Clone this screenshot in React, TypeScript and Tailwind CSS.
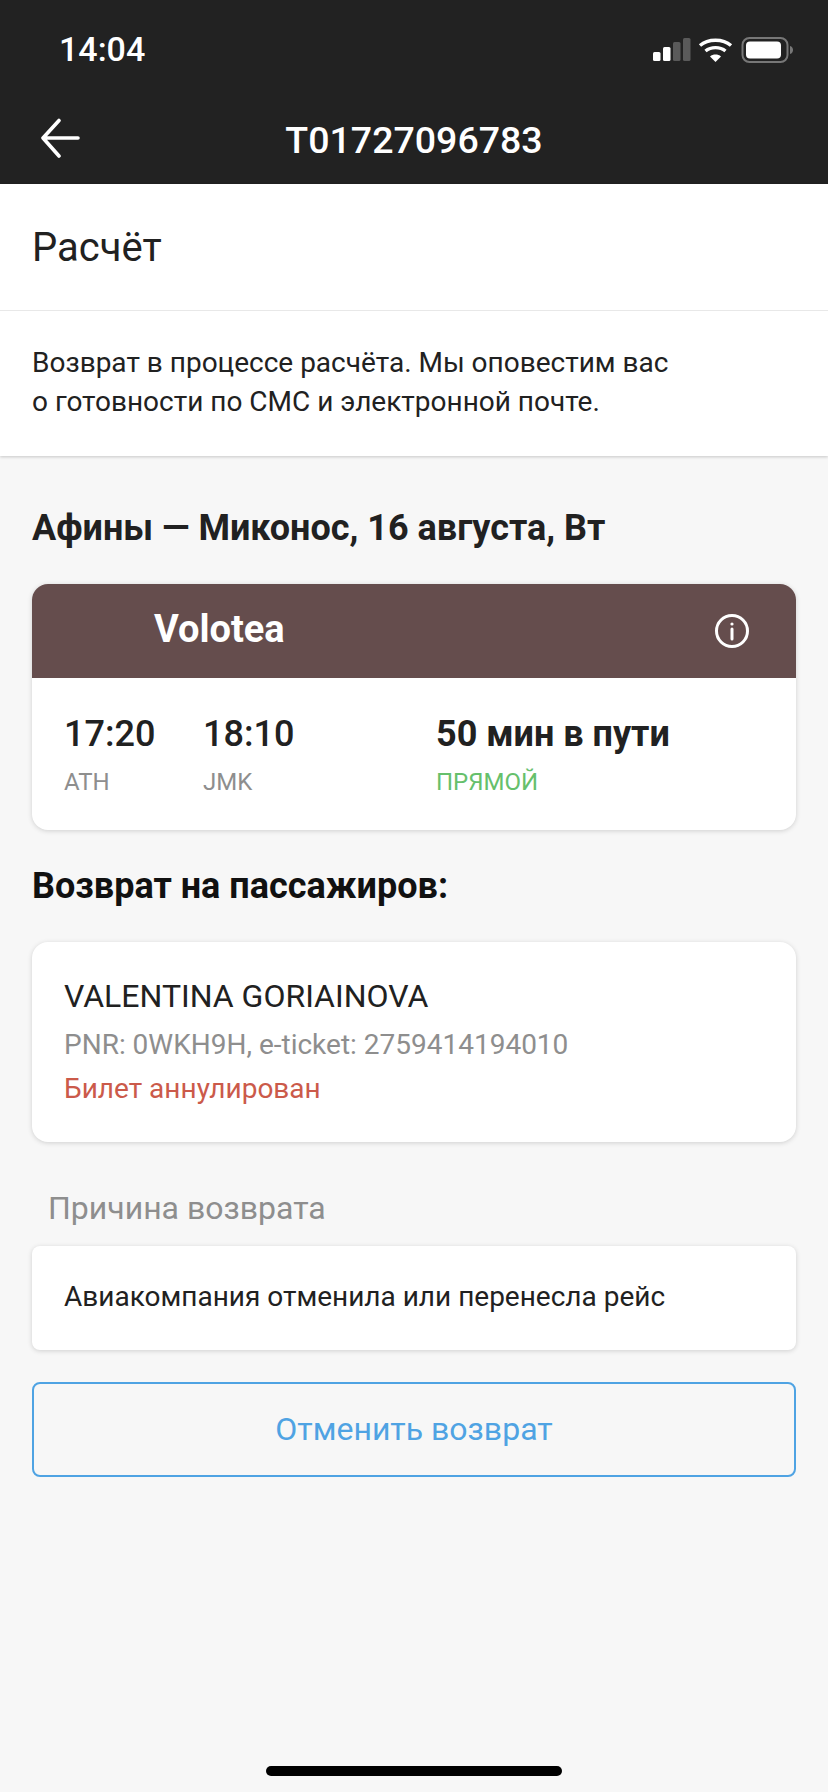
import React from "react";

function StatusIcons() {
  return (
    <svg width="142" height="26" viewBox="0 0 142 26" className="block">
      <rect x="0" y="15" width="7.5" height="9" rx="1.5" fill="#fff" />
      <rect x="10" y="10" width="7.5" height="14" rx="1.5" fill="#fff" />
      <rect x="20" y="5" width="7.5" height="19" rx="1.5" fill="#5a5a5a" />
      <rect x="30" y="1" width="7.5" height="23" rx="1.5" fill="#5a5a5a" />
      <path d="M47 8.5 C55 1.5 70 1.5 78 8.5" fill="none" stroke="#fff" strokeWidth="3.4" />
      <path d="M52.5 14 C58 9.5 67 9.5 72.5 14" fill="none" stroke="#fff" strokeWidth="3.4" />
      <path d="M62.5 25 L57 19.4 C60 16.8 65 16.8 68 19.4 Z" fill="#fff" />
      <rect x="89.5" y="1" width="45" height="24" rx="7" fill="none" stroke="#777" strokeWidth="2" />
      <rect x="93" y="4.5" width="35" height="17" rx="4" fill="#fff" />
      <path d="M137 9 C141 10 141 16 137 17 Z" fill="#777" />
    </svg>
  );
}

function Card({ children, className }: { children: React.ReactNode; className: string }) {
  return (
    <div className={"bg-white shadow-[0_1px_5px_rgba(0,0,0,0.16)] " + className}>{children}</div>
  );
}

export default function App() {
  return (
    <div className="relative flex min-h-[1792px] w-[828px] flex-col bg-[#f7f7f7] font-['Roboto',sans-serif] text-[#212121]">
      <header className="h-[184px] bg-[#222222] text-white">
        <div className="flex h-[98px] items-start justify-between pl-[59px] pr-[33px] pt-[29px]">
          <span className="text-[34px] leading-[40px] font-medium">14:04</span>
          <div className="pt-[8px]"><StatusIcons /></div>
        </div>
        <div className="relative flex h-[86px] items-start justify-center pt-[19px]">
          <svg width="40" height="40" viewBox="0 0 40 40" className="absolute left-[40px] top-[20px]" fill="none" stroke="#fff" strokeWidth="3.6" strokeLinecap="round" strokeLinejoin="round">
            <path d="M38 20 H4 M19 2.5 L3 20 L19 38" />
          </svg>
          <span className="text-[37.5px] leading-[46px] font-medium">T01727096783</span>
        </div>
      </header>

      <section className="bg-white shadow-[0_1px_3px_rgba(0,0,0,0.2)]">
        <div className="flex h-[127px] items-center border-b border-[#e8e8e8] pl-[32px] pt-[2px]">
          <h1 className="text-[40px] leading-[46px] font-normal">Расчёт</h1>
        </div>
        <p className="pl-[32px] pt-[32px] pb-[35px] text-[28px] leading-[39px]">
          Возврат в процессе расчёта. Мы оповестим вас
          <br />о готовности по СМС и электронной почте.
        </p>
      </section>

      <main className="flex flex-col px-[32px]">
        <h2 className="mt-[51px] text-[36px] leading-[42px] font-bold">Афины — Миконос, 16 августа, Вт</h2>

        <Card className="mt-[35px] h-[246px] overflow-hidden rounded-[16px]">
          <div className="flex h-[94px] items-center justify-between bg-[#654d4d] pl-[122px] pr-[46px] text-white">
            <span className="pb-[4px] text-[38px] leading-[46px] font-bold">Volotea</span>
            <svg width="36" height="36" viewBox="0 0 36 36" fill="none" stroke="#fff" strokeWidth="3">
              <circle cx="18" cy="18" r="15.5" />
              <path d="M18 16 V26" strokeLinecap="round" />
              <circle cx="18" cy="11" r="1.6" fill="#fff" stroke="none" />
            </svg>
          </div>
          <div className="flex pl-[32px] pt-[35px]">
            <div className="w-[139px]">
              <div className="text-[36px] leading-[42px] font-medium">17:20</div>
              <div className="mt-[12px] text-[24px] leading-[30px] text-[#8e8e8e]">ATH</div>
            </div>
            <div className="w-[233px]">
              <div className="text-[36px] leading-[42px] font-medium">18:10</div>
              <div className="mt-[12px] text-[24px] leading-[30px] text-[#8e8e8e]">JMK</div>
            </div>
            <div>
              <div className="text-[36px] leading-[42px] font-bold">50 мин в пути</div>
              <div className="mt-[12px] text-[24px] leading-[30px] text-[#66c06c]">ПРЯМОЙ</div>
            </div>
          </div>
        </Card>

        <h2 className="mt-[35px] text-[36px] leading-[42px] font-bold text-[#111111]">Возврат на пассажиров:</h2>

        <Card className="mt-[35px] h-[200px] rounded-[16px] pl-[32px] pt-[35px]">
          <div className="text-[32px] leading-[38px]">VALENTINA GORIAINOVA</div>
          <div className="mt-[13px] text-[28px] leading-[34px] text-[#8e8e8e]">PNR: 0WKH9H, e-ticket: 2759414194010</div>
          <div className="mt-[10px] text-[28px] leading-[34px] text-[#cb5a4a]">Билет аннулирован</div>
        </Card>

        <div className="mt-[47px] pl-[16px] text-[32px] leading-[38px] text-[#8e8e8e]">Причина возврата</div>

        <Card className="mt-[19px] flex h-[104px] items-center rounded-[8px] pl-[32px]">
          <span className="pb-[3px] text-[28px] leading-[34px]">Авиакомпания отменила или перенесла рейс</span>
        </Card>

        <button className="mt-[32px] flex h-[95px] items-center justify-center rounded-[8px] border-2 border-[#4fa3e3] bg-transparent pb-[2px] text-[32px] text-[#4fa3e3]">
          Отменить возврат
        </button>
      </main>

      <div className="absolute bottom-[16px] left-[266px] h-[10px] w-[296px] rounded-full bg-black" />
    </div>
  );
}
